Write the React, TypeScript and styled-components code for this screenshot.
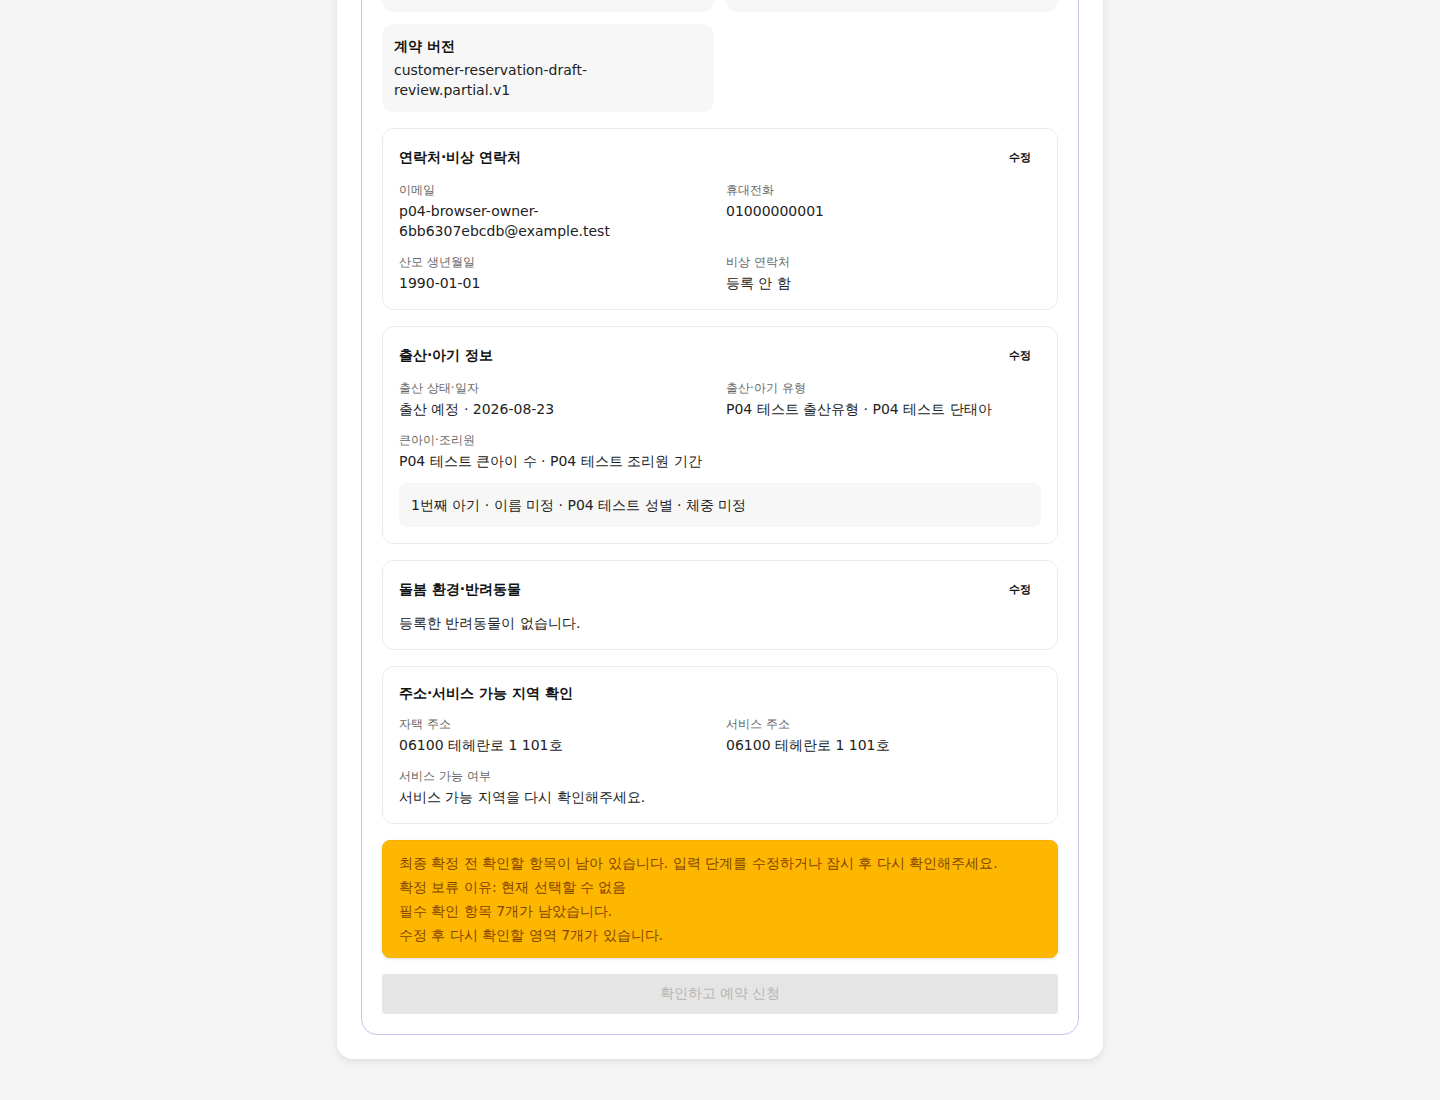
import React from 'react';
import styled, { createGlobalStyle } from 'styled-components';

const GlobalStyle = createGlobalStyle`
  html, body {
    margin: 0;
    padding: 0;
    background: #f5f5f5;
    font-family: "DejaVu Sans", "Noto Sans", sans-serif;
    color: #1a1a1a;
  }
  * {
    box-sizing: border-box;
  }
`;

const Page = styled.div`
  display: flex;
  justify-content: center;
  padding-bottom: 30px;
`;

const Shell = styled.div`
  width: 766px;
  margin-top: -121px;
  padding: 24px;
  background: #fff;
  border-radius: 16px;
  box-shadow: 0 2px 10px rgba(0, 0, 0, 0.1);
`;

const Panel = styled.div`
  display: flex;
  flex-direction: column;
  gap: 16px;
  padding: 20px;
  border: 1px solid #cbc3f5;
  border-radius: 16px;
`;

const TileGrid = styled.div`
  display: grid;
  grid-template-columns: 1fr 1fr;
  gap: 12px;
`;

const Tile = styled.div`
  min-height: 88px;
  padding: 12px;
  background: #f7f7f7;
  border-radius: 12px;
`;

const TileTitle = styled.div`
  font-size: 14px;
  font-weight: 700;
  line-height: 20px;
  margin-bottom: 4px;
  color: #111;
`;

const TileValue = styled.div`
  font-size: 14px;
  line-height: 20px;
  color: #222;
`;

const Card = styled.section`
  display: flex;
  flex-direction: column;
  gap: 12px;
  padding: 16px;
  border: 1px solid #ebebeb;
  border-radius: 12px;
  background: #fff;
`;

const CardHeader = styled.div`
  display: flex;
  align-items: center;
  justify-content: space-between;
`;

const CardTitle = styled.h3`
  margin: 0;
  font-size: 14px;
  font-weight: 700;
  line-height: 20px;
  color: #111;
`;

const EditButton = styled.button`
  height: 24px;
  padding: 0 10px;
  border: none;
  background: transparent;
  font-family: inherit;
  font-size: 11px;
  font-weight: 600;
  color: #111;
  cursor: pointer;
`;

const FieldGrid = styled.dl`
  display: grid;
  grid-template-columns: 1fr 1fr;
  column-gap: 12px;
  row-gap: 12px;
  margin: 0;
`;

const Field = styled.div`
  display: flex;
  flex-direction: column;
  gap: 2px;
  min-width: 0;
`;

const Label = styled.dt`
  font-size: 12px;
  line-height: 18px;
  color: #666;
`;

const Value = styled.dd`
  margin: 0;
  font-size: 14px;
  line-height: 20px;
  color: #222;
`;

const Note = styled.div`
  padding: 12px;
  background: #f7f7f7;
  border-radius: 8px;
  font-size: 14px;
  line-height: 20px;
  color: #222;
`;

const Text = styled.p`
  margin: 0;
  font-size: 14px;
  line-height: 20px;
  color: #222;
`;

const Warning = styled.div`
  display: flex;
  flex-direction: column;
  gap: 4px;
  padding: 12px 16px;
  background: #fdb700;
  border: 1px solid #f5b000;
  border-radius: 8px;
  box-shadow: 0 1px 3px rgba(0, 0, 0, 0.12);
`;

const WarningLine = styled.p`
  margin: 0;
  font-size: 14px;
  line-height: 20px;
  color: #844300;
`;

const SubmitButton = styled.button`
  height: 40px;
  border: none;
  border-radius: 4px;
  background: #e5e5e5;
  color: #b5b5b5;
  font-family: inherit;
  font-size: 14px;
  cursor: not-allowed;
`;

type Item = { label: string; value: string };

const Fields: React.FC<{ items: Item[] }> = ({ items }) => (
  <FieldGrid>
    {items.map((it) => (
      <Field key={it.label}>
        <Label>{it.label}</Label>
        <Value>{it.value}</Value>
      </Field>
    ))}
  </FieldGrid>
);

const Section: React.FC<{ title: string; editable?: boolean; children: React.ReactNode }> = ({
  title,
  editable,
  children,
}) => (
  <Card>
    <CardHeader>
      <CardTitle>{title}</CardTitle>
      {editable && <EditButton type="button">수정</EditButton>}
    </CardHeader>
    {children}
  </Card>
);

export default function App() {
  return (
    <>
      <GlobalStyle />
      <Page>
        <Shell>
          <Panel>
            <TileGrid>
              <Tile />
              <Tile />
              <Tile>
                <TileTitle>계약 버전</TileTitle>
                <TileValue>customer-reservation-draft-review.partial.v1</TileValue>
              </Tile>
            </TileGrid>

            <Section title="연락처·비상 연락처" editable>
              <Fields
                items={[
                  { label: '이메일', value: 'p04-browser-owner-6bb6307ebcdb@example.test' },
                  { label: '휴대전화', value: '01000000001' },
                  { label: '산모 생년월일', value: '1990-01-01' },
                  { label: '비상 연락처', value: '등록 안 함' },
                ]}
              />
            </Section>

            <Section title="출산·아기 정보" editable>
              <Fields
                items={[
                  { label: '출산 상태·일자', value: '출산 예정 · 2026-08-23' },
                  { label: '출산·아기 유형', value: 'P04 테스트 출산유형 · P04 테스트 단태아' },
                  { label: '큰아이·조리원', value: 'P04 테스트 큰아이 수 · P04 테스트 조리원 기간' },
                ]}
              />
              <Note>1번째 아기 · 이름 미정 · P04 테스트 성별 · 체중 미정</Note>
            </Section>

            <Section title="돌봄 환경·반려동물" editable>
              <Text>등록한 반려동물이 없습니다.</Text>
            </Section>

            <Section title="주소·서비스 가능 지역 확인">
              <Fields
                items={[
                  { label: '자택 주소', value: '06100 테헤란로 1 101호' },
                  { label: '서비스 주소', value: '06100 테헤란로 1 101호' },
                  { label: '서비스 가능 여부', value: '서비스 가능 지역을 다시 확인해주세요.' },
                ]}
              />
            </Section>

            <Warning>
              <WarningLine>
                최종 확정 전 확인할 항목이 남아 있습니다. 입력 단계를 수정하거나 잠시 후 다시 확인해주세요.
              </WarningLine>
              <WarningLine>확정 보류 이유: 현재 선택할 수 없음</WarningLine>
              <WarningLine>필수 확인 항목 7개가 남았습니다.</WarningLine>
              <WarningLine>수정 후 다시 확인할 영역 7개가 있습니다.</WarningLine>
            </Warning>

            <SubmitButton type="button" disabled>
              확인하고 예약 신청
            </SubmitButton>
          </Panel>
        </Shell>
      </Page>
    </>
  );
}
